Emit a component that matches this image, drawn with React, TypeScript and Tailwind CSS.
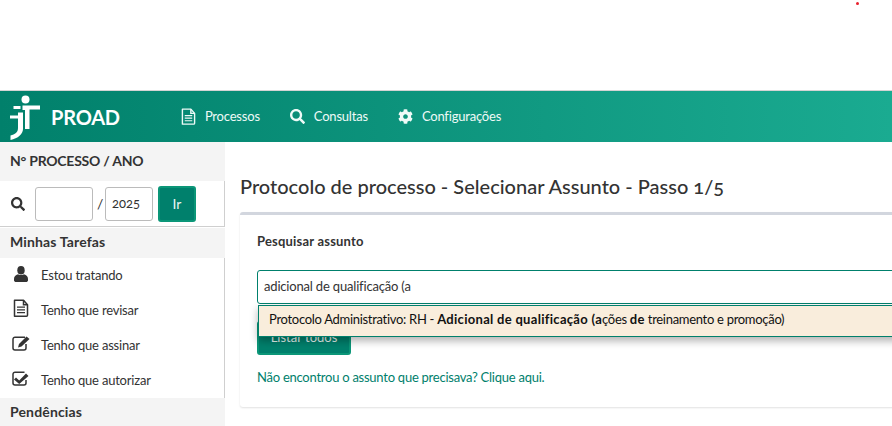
import { FaCog, FaSearch } from "react-icons/fa";

function Logo() {
  return (
    <svg width="42" height="50" viewBox="0 0 42 50" className="shrink-0" fill="#fff">
      <circle cx="25.5" cy="7.5" r="4" />
      <path d="M22.500 13.500H40V17.500H29.500V37H25V18H22.500Z" />
      <path d="M13.500 14H20.500V17H13.500Z" />
      <path d="M18 20.500H23V37C23 42 18 46.500 10.500 48V43.500C15 42.500 18 40.500 18 36V26.500H10V23.500H18Z" />
    </svg>
  );
}

function FileIcon({ size, stroke }: { size: number; stroke: string }) {
  return (
    <svg width={size} height={size * 1.15} viewBox="0 0 16 18" fill="none" stroke={stroke} strokeWidth="1.500">
      <path d="M1.500 1h9l4 4.500V16a1 1 0 0 1-1 1h-12z" strokeLinejoin="round" />
      <path d="M10.500 1v4.500h4" />
      <path d="M4 8h8M4 10.700h8M4 13.400h8" strokeWidth="1.300" />
    </svg>
  );
}

function UserIcon() {
  return (
    <svg width="14" height="16" viewBox="0 0 14 16" fill="#333">
      <ellipse cx="7" cy="4.300" rx="3.700" ry="4.300" />
      <path d="M4 8.200c1.800 1.200 4.200 1.200 6 0 2.500.6 4 2.200 4 4.800v1.500c0 .8-1 1.500-2 1.500H2c-1 0-2-.7-2-1.500V13c0-2.600 1.500-4.200 4-4.800z" />
    </svg>
  );
}

function EditIcon() {
  return (
    <svg width="18" height="15" viewBox="0 0 18 15">
      <path d="M13 1.200H3a2 2 0 0 0-2 2V12a2 2 0 0 0 2 2h9a2 2 0 0 0 2-2V8" fill="none" stroke="#333" strokeWidth="1.500" />
      <path d="M14.500 0.500 17.500 3 9.500 10.500 6 11.500 7 8z" fill="#333" />
    </svg>
  );
}

function CheckIcon() {
  return (
    <svg width="17" height="15" viewBox="0 0 17 15">
      <path d="M12.500 1.200H3a2 2 0 0 0-2 2V12a2 2 0 0 0 2 2h9a2 2 0 0 0 2-2V9" fill="none" stroke="#333" strokeWidth="1.500" />
      <path d="M4 6.500 7.200 9.500 14 2.500 16.500 5 7.200 13 2 8.500z" fill="#333" />
    </svg>
  );
}

function NavItem({ icon, label }: { icon: React.ReactNode; label: string }) {
  return (
    <div className="flex items-center gap-[9px] text-[13px] tracking-[-0.2px] text-[#eefaf7]">
      {icon}
      <span>{label}</span>
    </div>
  );
}

function TaskItem({ icon, label }: { icon: React.ReactNode; label: string }) {
  return (
    <div className="flex h-[35px] items-center text-[13px] tracking-[-0.2px] text-[#333]">
      <span className="mb-[4px] flex w-[41px] shrink-0 justify-start pl-[12px]">{icon}</span>
      <span>{label}</span>
    </div>
  );
}

function SectionTitle({ children, className }: { children: React.ReactNode; className: string }) {
  return (
    <div className={`flex items-center bg-[#f4f4f4] pl-[10px] text-[14px] font-bold text-[#333] ${className}`}>{children}</div>
  );
}

export default function App() {
  return (
    <div className="relative h-[426px] w-[892px] overflow-hidden bg-white font-['Lato','Noto_Sans',sans-serif] [font-variant-numeric:oldstyle-nums]">
      <div className="absolute left-[856px] top-[2px] h-[3px] w-[3px] rounded-full bg-[#e8202c]" />
      <div className="h-[91px] border-b border-[#d4d4d4]" />
      <header className="flex h-[51px] items-center bg-gradient-to-r from-[#01806b] to-[#1aab91]">
        <Logo />
        <span className="ml-[9px] text-[20px] font-bold tracking-[-0.2px] text-white">PROAD</span>
        <div className="ml-[61px] flex items-center gap-[30px]">
          <NavItem icon={<FileIcon size={15} stroke="#eefaf7" />} label="Processos" />
          <NavItem icon={<FaSearch size={15} />} label="Consultas" />
          <NavItem icon={<FaCog size={15} />} label="Configurações" />
        </div>
      </header>
      <div className="flex">
        <aside className="h-[284px] w-[225px] shrink-0 overflow-hidden">
          <SectionTitle className="h-[39px] pb-[3px] tracking-[-0.25px]">N° PROCESSO / ANO</SectionTitle>
          <div className="flex h-[46px] items-center border-r border-b border-[#cfcfcf] pl-[11px]">
            <FaSearch size={14} className="text-[#333]" />
            <div className="ml-[10px] h-[34px] w-[58px] rounded-[3px] border border-[#bbb]" />
            <span className="ml-[4px] w-[8px] text-[14px] text-[#333]">/</span>
            <div className="flex h-[34px] w-[48px] items-center rounded-[3px] border border-[#bbb] pl-[6px] text-[13px] text-[#333]">2025</div>
            <div className="ml-[5px] flex h-[36px] w-[38px] items-center justify-center rounded-[3px] border-2 border-[#0b9678] bg-[#00806c] text-[14px] text-[#e6f5f1]">Ir</div>
          </div>
          <div className="h-px bg-white" />
          <SectionTitle className="h-[30px] pb-[3px] tracking-[0.15px]">Minhas Tarefas</SectionTitle>
          <div className="border-r border-[#cfcfcf]">
            <TaskItem icon={<span className="pl-[2px]"><UserIcon /></span>} label="Estou tratando" />
            <TaskItem icon={<span className="pl-[1px]"><FileIcon size={16} stroke="#333" /></span>} label="Tenho que revisar" />
            <TaskItem icon={<EditIcon />} label="Tenho que assinar" />
            <TaskItem icon={<CheckIcon />} label="Tenho que autorizar" />
          </div>
          <SectionTitle className="h-[28px] pb-[2px] tracking-[0.15px]">Pendências</SectionTitle>
        </aside>
        <main className="min-w-0 flex-1 pl-[15px]">
          <h1 className="mt-[31px] text-[20px] leading-[26px] font-medium text-[#333]">Protocolo de processo - Selecionar Assunto - Passo 1/5</h1>
          <section className="mt-[13px] h-[195px] w-[700px] rounded-[3px] border-t-[3px] border-[#d2d6de] bg-white pl-[17px] shadow-[0_1px_2px_rgba(0,0,0,0.12)]">
            <div className="pt-[17px] text-[13px] leading-[18px] font-bold tracking-[0.2px] text-[#333]">Pesquisar assunto</div>
            <div className="relative mt-[20px]">
              <div className="flex h-[34px] items-center rounded-[3px] border border-[#00806c] pl-[6px] text-[13px] tracking-[-0.18px] text-[#333]">adicional de qualificação (a</div>
              <div className="absolute top-[35px] left-[1px] z-10 flex h-[32px] w-[700px] items-center border border-[#00806c] bg-[#f9eddc] pb-[2px] pl-[10px] text-[13px] tracking-[-0.3px] text-[#111] shadow-[0_4px_8px_rgba(0,0,0,0.3)]">
                <span>Protocolo Administrativo: RH - <b className="tracking-[0.3px]">Adicional de qualificação (a</b>ções <b className="tracking-[0.3px]">de</b> treinamento e promoção)</span>
              </div>
            </div>
            <div className="mt-[17px] flex h-[34px] w-[94px] items-center justify-center rounded-[3px] border-2 border-[#0b9678] bg-[#00806c] text-[13px] text-[#e6f5f1]">Listar todos</div>
            <div className="mt-[13px] text-[13px] leading-[18px] tracking-[-0.25px] text-[#00806c]">Não encontrou o assunto que precisava? Clique aqui.</div>
          </section>
        </main>
      </div>
    </div>
  );
}
